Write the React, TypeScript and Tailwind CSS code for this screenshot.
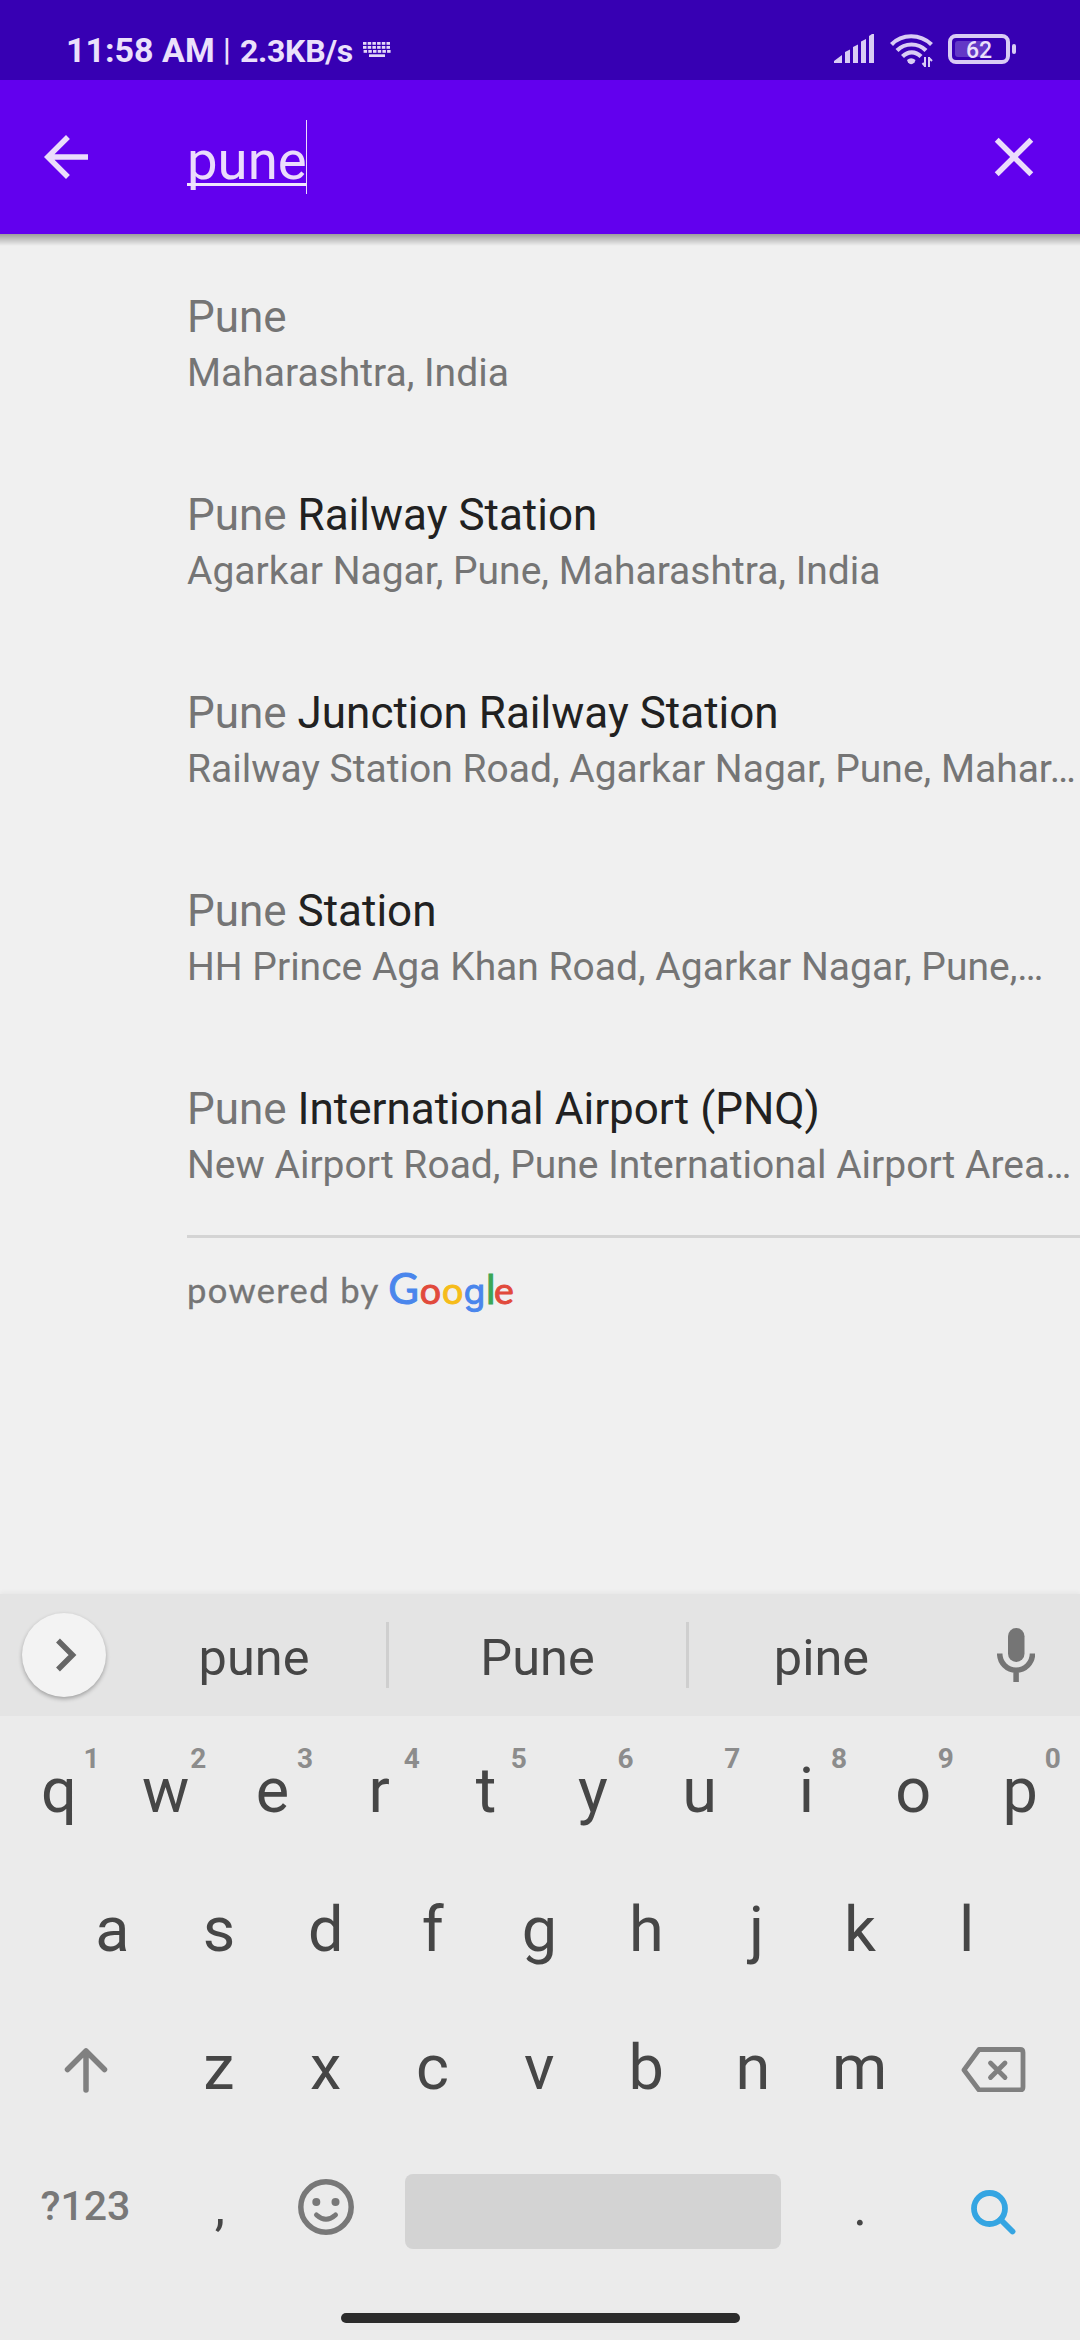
import React from "react";

const results = [
  { rest: "", sub: "Maharashtra, India" },
  { rest: "Railway Station", sub: "Agarkar Nagar, Pune, Maharashtra, India" },
  { rest: "Junction Railway Station", sub: "Railway Station Road, Agarkar Nagar, Pune, Mahar…" },
  { rest: "Station", sub: "HH Prince Aga Khan Road, Agarkar Nagar, Pune,…" },
  { rest: "International Airport (PNQ)", sub: "New Airport Road, Pune International Airport Area…" },
];

function StatusBar() {
  return (
    <header className="flex h-20 items-start bg-[#3700b3] text-[#ebe0fb]">
      <div className="flex h-20 items-start pl-[66px] pt-[30px] font-bold leading-10 whitespace-pre">
        <span className="w-[149px] text-[34px]">11:58 AM</span>
        <span className="ml-[8px] w-[17px] text-[31px] font-medium">|</span>
        <span className="w-[123px] pt-px text-[32px] tracking-[-0.3px]">2.3KB/s</span>
      </div>
      <svg className="mt-[42px]" width="28" height="16" viewBox="0 0 28 16" fill="#e4d8f8">
        {[0, 4, 8].map((y, r) =>
          [0, 1, 2, 3, 4, 5].map((i) => <rect key={y + "-" + i} x={i * 4.7 + (r === 2 ? 0.6 : 0)} y={y} width="3.5" height="2.8" />),
        )}
        <rect x="6" y="12.3" width="16" height="2.7" />
      </svg>
      <svg className="ml-[443px] mt-[34px]" width="40" height="30" viewBox="0 0 40 30" fill="#d9ccf5">
        <path d="M0 29V27L8 21V29ZM11 29V18L16 15.5V29ZM19 29V13L24 10.5V29ZM27 29V7.5L32 5V29ZM35 29V2L38 0H40V29Z" />
      </svg>
      <svg className="ml-4 mt-[33px]" width="44" height="34" viewBox="0 0 44 34" fill="none" stroke="#d9ccf5" strokeWidth="4.2">
        <path d="M1.5 11.5C12 .5 30 .5 41.500 11.500M7 17.500C15 9.500 28 9.500 36 17.500M12.500 23.500C18 18 25.500 18 31 23.500" />
        <path d="M17 27Q21 23.500 25.500 27L24.500 29.500Q21 33 18 29.500Z" fill="#d9ccf5" stroke="none" />
        <path d="M35 24V34M39 24V34M32.500 30L35 33M39 25L42 28" strokeWidth="2" />
      </svg>
      <div className="relative ml-[14px] mt-[34px] flex h-[30px] w-[62px] items-center justify-center rounded-[8px] border-4 border-[#d9ccf5]">
        <div className="absolute left-[3px] top-[3px] h-4 w-[32px] rounded-[3px] bg-[#6338c6]" />
        <span className="relative mt-[2px] text-[23px] font-medium leading-none">62</span>
      </div>
      <div className="ml-[2px] mt-11 h-[10px] w-1 rounded-[2px] bg-[#d9ccf5]" />
    </header>
  );
}

function SearchBar() {
  return (
    <div className="relative flex h-[154px] items-start bg-[#6200ee]">
      <svg className="ml-[33px] mt-11" width="66" height="66" viewBox="0 0 24 24" fill="#ebdcfc">
        <path d="M20 11H7.830l5.590-5.590L12 4l-8 8 8 8 1.410-1.410L7.830 13H20v-2z" />
      </svg>
      <div className="relative ml-[88px] mt-[40px] h-[74px] w-[120px] border-r border-[#ebdcfc]">
        <div className="text-[54.500px] leading-[80px] text-[#ebdcfc]">pune</div>
        <div className="absolute left-0 top-[63px] h-[3px] w-[120px] bg-[#f0e5fd]" />
      </div>
      <svg className="ml-auto mr-[33px] mt-11" width="66" height="66" viewBox="0 0 24 24" fill="#ebdcfc">
        <path d="M19 6.410L17.590 5 12 10.590 6.410 5 5 6.410 10.590 12 5 17.590 6.410 19 12 13.410 17.590 19 19 17.590 13.410 12z" />
      </svg>
      <div className="absolute left-0 top-full h-[12px] w-full bg-gradient-to-b from-black/35 to-transparent" />
    </div>
  );
}

function PoweredBy() {
  return (
    <div className="flex h-[80px] items-baseline pt-[24px] font-['Lato'] leading-[50px]">
      <span className="w-[201px] text-[34.500px] tracking-[1.400px] whitespace-nowrap text-[#757575] [-webkit-text-stroke:0.4px]">powered by</span>
      <span className="relative top-px flex items-baseline text-center text-[37.500px] [-webkit-text-stroke:1px]">
        <span className="w-[31px] text-[42px] text-[#4a86ec]">G</span>
        <span className="w-[23px] text-[#e14a3c]">o</span>
        <span className="w-[21px] text-[#f6bc1a]">o</span>
        <span className="w-[23px] font-['Inter'] text-[35px] text-[#4a86ec]">g</span>
        <span className="w-[8px] text-[40px] text-[#3aa757]">l</span>
        <span className="w-[20px] text-[#e14a3c]">e</span>
      </span>
    </div>
  );
}

function Key({ c, n }: { c: string; n?: string }) {
  return (
    <div className={c === "j" ? "relative w-[106.800px] pl-[7px] text-center text-[63px] leading-[139px]" : "relative w-[106.800px] text-center text-[63px] leading-[139px]"}>
      {c}
      {n && (
        <span className="absolute left-[74px] top-[26px] w-[24px] text-center text-[28px] font-bold leading-[24px] text-[#8c8c8c]">{n}</span>
      )}
    </div>
  );
}

function Suggestions() {
  return (
    <div className="flex h-[122px] items-center bg-[#e4e4e4] text-[50.500px] text-[#464646] shadow-[0_-2px_4px_rgba(0,0,0,0.04)]">
      <div className="ml-[22px] flex size-[84px] items-center justify-center rounded-full bg-[#f3f3f3] shadow-[0_2px_4px_rgba(0,0,0,0.3)]">
        <svg className="ml-[3px]" width="22" height="34" viewBox="0 0 22 34" fill="none" stroke="#666" strokeWidth="5.500">
          <path d="M3 2.500L17.500 17 3 31.500" />
        </svg>
      </div>
      <div className="ml-4 w-[264px] pt-[6px] text-center">pune</div>
      <div className="h-[66px] w-[3px] bg-[#cfcfcf]" />
      <div className="w-[297px] pt-[6px] text-center">Pune</div>
      <div className="h-[66px] w-[3px] bg-[#cfcfcf]" />
      <div className="w-[265px] pt-[6px] text-center">pine</div>
      <svg className="ml-[43px]" width="38" height="54" viewBox="0 0 38 54" fill="#757575">
        <rect x="11" y="0" width="16.500" height="34" rx="8.200" />
        <path d="M2.700 25.500a16.400 16.700 0 0 0 32.800 0M19.100 42v12" fill="none" stroke="#757575" strokeWidth="5.500" />
      </svg>
    </div>
  );
}

function Keyboard() {
  return (
    <section className="mt-auto h-[746px] text-[#464646]">
      <Suggestions />
      <div className="h-[624px] bg-[#ebebeb] px-[5.500px] pt-[5px]">
        <div className="flex h-[139px]">
          {"qwertyuiop".split("").map((c, i) => (
            <Key key={c} c={c} n={String((i + 1) % 10)} />
          ))}
        </div>
        <div className="flex h-[138px] pl-[53.400px]">
          {"asdfghjkl".split("").map((c) => (
            <Key key={c} c={c} />
          ))}
        </div>
        <div className="flex h-[139px]">
          <div className="flex w-[160px] items-center justify-center pt-[3px]">
            <svg width="44" height="48" viewBox="0 0 44 48" fill="none" stroke="#808080" strokeWidth="5.500" strokeLinecap="round" strokeLinejoin="round">
              <path d="M22 45V6M3.500 24.500L22 6l18.500 18.500" />
            </svg>
          </div>
          {"zxcvbnm".split("").map((c) => (
            <Key key={c} c={c} />
          ))}
          <div className="flex w-[160px] items-center justify-center pt-[2px]">
            <svg width="66" height="46" viewBox="0 0 66 46" fill="none" stroke="#808080" strokeWidth="4.800" strokeLinecap="round" strokeLinejoin="round">
              <path d="M4 24L19 3.500H60Q63 3.500 63 6.500V41Q63 44 60 44H19Z" />
              <path d="M30.500 17L45 31.500M45 17L30.500 31.500" />
            </svg>
          </div>
        </div>
        <div className="flex h-[139px]">
          <div className="w-[160px] text-center text-[41px] font-medium leading-[139px] text-[#787878]">?123</div>
          <div className="w-[106.800px] pl-[2px] text-center text-[52px] leading-[142px]">,</div>
          <div className="flex w-[106.800px] items-center justify-center">
            <svg width="56" height="56" viewBox="0 0 56 56" fill="none" stroke="#787878" strokeWidth="5.500">
              <circle cx="28" cy="28" r="25.200" />
              <circle cx="18.300" cy="23" r="4" fill="#787878" stroke="none" />
              <circle cx="37.500" cy="23" r="4" fill="#787878" stroke="none" />
              <path d="M18.500 36Q28 44.500 37.500 36" strokeWidth="5" strokeLinecap="round" />
            </svg>
          </div>
          <div className="flex w-[427px] items-center justify-center pt-[10px]">
            <div className="h-[75px] w-[376px] rounded-[8px] bg-[#d3d3d3]" />
          </div>
          <div className="w-[106.800px] pl-px text-center text-[52px] leading-[142px]">.</div>
          <div className="flex w-[160px] items-center justify-center pt-[10px]">
            <svg width="46" height="46" viewBox="0 0 46 46" fill="none" stroke="#35a5e2" strokeWidth="5.800" strokeLinecap="round">
              <circle cx="19.500" cy="19.500" r="15.500" />
              <path d="M30.500 30.500L42.500 42.500" />
            </svg>
          </div>
        </div>
        <div className="mx-auto mt-[37px] h-[10px] w-[399px] rounded-full bg-[#2c2c2c]" />
      </div>
    </section>
  );
}

export default function App() {
  return (
    <main className="flex h-[2340px] w-[1080px] flex-col overflow-hidden bg-[#f0f0f0] font-['Roboto',sans-serif]">
      <StatusBar />
      <SearchBar />
      <div className="pl-[187px] pt-[9px]">
        {results.map((r) => (
          <div key={r.sub} className="h-[198px] pt-[46px] whitespace-nowrap text-[#757575]">
            <div className="text-[44px] leading-[56px]">
              Pune <span className="text-[#212121]">{r.rest}</span>
            </div>
            <div className="text-[39px] leading-[56px]">{r.sub}</div>
          </div>
        ))}
        <div className="mt-[2px] h-[3px] bg-[#d4d4d4]" />
        <PoweredBy />
      </div>
      <Keyboard />
    </main>
  );
}
